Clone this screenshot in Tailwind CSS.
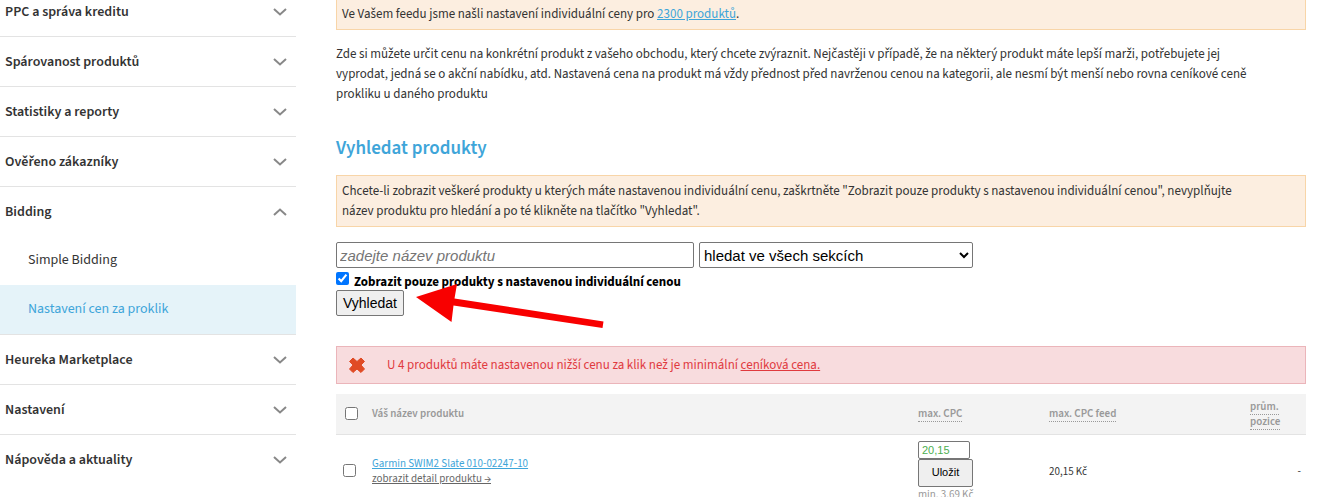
<!DOCTYPE html>
<html lang="cs">

<head>
    <meta charset="UTF-8">
    <meta name="viewport" content="width=device-width, initial-scale=1.0">
    <script src="https://cdn.jsdelivr.net/npm/@tailwindcss/browser@4"></script>
    <title>Nastavení cen za proklik</title>
</head>

<body class="bg-white font-['Source_Sans_3','Source_Sans_Pro',Lato,sans-serif] text-[13px] leading-5 text-[#333]">
    <div class="flex items-start gap-10">
        <!-- sidebar -->
        <nav class="w-74 shrink-0">
            <ul class="text-sm leading-5 font-semibold">
                <li class="border-b border-[#e3e3e3]">
                    <a href="#" class="flex justify-between items-center pl-[5px] pr-[9px] pt-[2px] pb-[14px]">PPC a správa kreditu
                        <svg class="w-[14px] h-2 text-[#888]" viewBox="0 0 14 8" fill="none" stroke="currentColor" stroke-width="2"><path d="M1 1l6 5.5L13 1" /></svg>
                    </a>
                </li>
                <li class="border-b border-[#e3e3e3]">
                    <a href="#" class="flex justify-between items-center pl-[5px] pr-[9px] pt-[15px] pb-[14px]">Spárovanost produktů
                        <svg class="w-[14px] h-2 text-[#888]" viewBox="0 0 14 8" fill="none" stroke="currentColor" stroke-width="2"><path d="M1 1l6 5.5L13 1" /></svg>
                    </a>
                </li>
                <li class="border-b border-[#e3e3e3]">
                    <a href="#" class="flex justify-between items-center pl-[5px] pr-[9px] pt-[15px] pb-[14px]">Statistiky a reporty
                        <svg class="w-[14px] h-2 text-[#888]" viewBox="0 0 14 8" fill="none" stroke="currentColor" stroke-width="2"><path d="M1 1l6 5.5L13 1" /></svg>
                    </a>
                </li>
                <li class="border-b border-[#e3e3e3]">
                    <a href="#" class="flex justify-between items-center pl-[5px] pr-[9px] pt-[15px] pb-[14px]">Ověřeno zákazníky
                        <svg class="w-[14px] h-2 text-[#888]" viewBox="0 0 14 8" fill="none" stroke="currentColor" stroke-width="2"><path d="M1 1l6 5.5L13 1" /></svg>
                    </a>
                </li>
                <li class="border-b border-[#e3e3e3]">
                    <a href="#" class="flex justify-between items-center pl-[5px] pr-[9px] pt-[15px] pb-[14px]">Bidding
                        <svg class="w-[14px] h-2 text-[#888]" viewBox="0 0 14 8" fill="none" stroke="currentColor" stroke-width="2"><path d="M1 7l6-5.5L13 7" /></svg>
                    </a>
                    <ul class="font-normal">
                        <li><a href="#" class="block pl-7 pt-[14px] pb-[15px]">Simple Bidding</a></li>
                        <li><a href="#" class="block pl-7 pt-[14px] pb-[15px] bg-[#e5f3f9] text-[#3ea5d9]">Nastavení cen za proklik</a></li>
                    </ul>
                </li>
                <li class="border-b border-[#e3e3e3]">
                    <a href="#" class="flex justify-between items-center pl-[5px] pr-[9px] pt-[15px] pb-[14px]">Heureka Marketplace
                        <svg class="w-[14px] h-2 text-[#888]" viewBox="0 0 14 8" fill="none" stroke="currentColor" stroke-width="2"><path d="M1 1l6 5.5L13 1" /></svg>
                    </a>
                </li>
                <li class="border-b border-[#e3e3e3]">
                    <a href="#" class="flex justify-between items-center pl-[5px] pr-[9px] pt-[15px] pb-[14px]">Nastavení
                        <svg class="w-[14px] h-2 text-[#888]" viewBox="0 0 14 8" fill="none" stroke="currentColor" stroke-width="2"><path d="M1 1l6 5.5L13 1" /></svg>
                    </a>
                </li>
                <li>
                    <a href="#" class="flex justify-between items-center pl-[5px] pr-[9px] pt-[15px] pb-[14px]">Nápověda a aktuality
                        <svg class="w-[14px] h-2 text-[#888]" viewBox="0 0 14 8" fill="none" stroke="currentColor" stroke-width="2"><path d="M1 1l6 5.5L13 1" /></svg>
                    </a>
                </li>
            </ul>
        </nav>

        <!-- content -->
        <main class="flex-1 min-w-0 mr-[29px]">
            <p class="border border-t-0 border-[#f8d5a8] bg-[#fceee0] px-[5px] pt-1 pb-[5px]">Ve Vašem feedu jsme našli nastavení individuální ceny pro <a href="#" class="text-[#3ea5d9] underline">2300 produktů</a>.</p>

            <p class="mt-[14px] pr-11">Zde si můžete určit cenu na konkrétní produkt z vašeho obchodu, který chcete zvýraznit. Nejčastěji v případě, že na některý produkt máte lepší marži, potřebujete jej vyprodat, jedná se o akční nabídku, atd. Nastavená cena na produkt má vždy přednost před navrženou cenou na kategorii, ale nesmí být menší nebo rovna ceníkové ceně prokliku u daného produktu</p>

            <h2 class="mt-[33px] text-[19px] leading-6 font-semibold text-[#3ea5d9]">Vyhledat produkty</h2>

            <p class="mt-[14px] border border-[#f8d5a8] bg-[#fceee0] py-[5px] pl-[5px] pr-12">Chcete-li zobrazit veškeré produkty u kterých máte nastavenou individuální cenu, zaškrtněte "Zobrazit pouze produkty s nastavenou individuální cenou", nevyplňujte název produktu pro hledání a po té klikněte na tlačítko "Vyhledat".</p>

            <form class="relative mt-[15px] font-['Liberation_Sans',sans-serif] text-black">
                <div class="flex gap-[5px]">
                    <input type="text" aria-label="Název produktu" placeholder="zadejte název produktu" class="w-[358px] h-[26px] border border-[#767676] rounded-xs px-[3px] text-[15px] placeholder:italic placeholder:text-[#757575]">
                    <select aria-label="Sekce" class="w-[274px] h-[26px] border border-[#767676] rounded-xs bg-white text-[15px]">
                        <option>hledat ve všech sekcích</option>
                    </select>
                </div>
                <div class="flex items-start gap-[5px] pt-1 h-[22px]">
                    <input type="checkbox" id="only-set" checked class="size-[13px]">
                    <label for="only-set" class="font-['Source_Sans_3','Source_Sans_Pro',Lato,sans-serif] font-bold">Zobrazit pouze produkty s nastavenou individuální cenou</label>
                </div>
                <button type="button" class="block h-[26px] w-[68px] border border-[#767676] rounded-xs bg-[#efefef] text-sm">Vyhledat</button>
                <svg class="absolute left-20 top-[42px] w-[188px] h-[45px]" viewBox="0 0 188 45" fill="#f80000"><path d="M0 13L41 0L38.500 14.500L187.500 37.500L186.500 44L37.500 21.500L35.500 38Z" /></svg>
            </form>

            <div class="mt-[30px] flex items-center border border-[#ebb5ba] bg-[#f8dcde] pl-3 py-2 text-[#e03a3e]">
                <svg class="w-4 h-4 mr-[22px]" viewBox="0 0 16 16" fill="#e04b25"><path d="M4 1L8 4.500L12 1L15.500 4.500L12 8L15.500 12L12 15.500L8 12L4 15.500L0.500 12L4 8L0.500 4.500Z" stroke="#e04b25" stroke-linejoin="round" stroke-width="1" /></svg>
                <p>U 4 produktů máte nastavenou nižší cenu za klik než je minimální <a href="#" class="underline">ceníková cena.</a></p>
            </div>

            <table class="mt-[10px] w-full table-fixed text-left text-[11px] leading-[15px]">
                <colgroup>
                    <col class="w-9">
                    <col>
                    <col class="w-[131px]">
                    <col class="w-[201px]">
                    <col class="w-14">
                </colgroup>
                <thead class="bg-[#f3f3f3] text-[#999]">
                    <tr class="h-10 border-b border-[#e3e3e3]">
                        <th class="pl-[9px]"><input type="checkbox" aria-label="Vybrat vše" class="block size-[13px]"></th>
                        <th class="font-semibold">Váš název produktu</th>
                        <th class="font-semibold"><span class="border-b border-dotted border-[#999]">max. CPC</span></th>
                        <th class="font-semibold"><span class="border-b border-dotted border-[#999]">max. CPC feed</span></th>
                        <th class="font-semibold"><span class="border-b border-dotted border-[#999]">prům. pozice</span></th>
                    </tr>
                </thead>
                <tbody>
                    <tr>
                        <td class="pl-[7px]"><input type="checkbox" aria-label="Vybrat Garmin SWIM2 Slate" class="block size-[13px]"></td>
                        <td class="pt-[2px]">
                            <a href="#" class="text-[#3ea5d9] underline">Garmin SWIM2 Slate 010-02247-10</a><br>
                            <a href="#" class="text-[#666] underline">zobrazit detail produktu →</a>
                        </td>
                        <td class="pt-[6px] pb-1">
                            <input type="text" aria-label="max. CPC" value="20,15" class="block w-[52px] h-[18px] border border-[#767676] rounded-xs px-[3px] font-['Liberation_Sans',sans-serif] text-[11px] text-[#4caf50]">
                            <button type="button" class="block h-7 w-[55px] border border-[#767676] rounded-xs bg-[#efefef] font-['Liberation_Sans',sans-serif] text-[11px] text-black">Uložit</button>
                            <span class="text-[#999]">min. 3,69 Kč</span>
                        </td>
                        <td class="pt-[2px]">20,15 Kč</td>
                        <td class="pt-[2px] pr-[5px] text-right">-</td>
                    </tr>
                </tbody>
            </table>
        </main>
    </div>
</body>

</html>
